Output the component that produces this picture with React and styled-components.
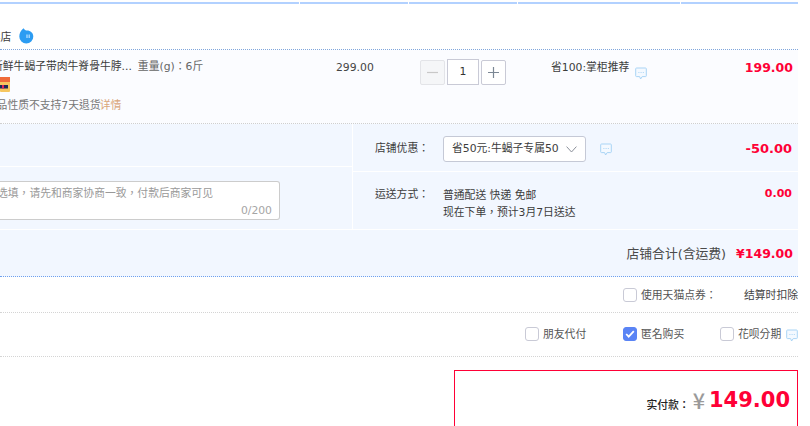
import React from "react";
import styled, { createGlobalStyle } from "styled-components";

const GlobalStyle = createGlobalStyle`
  html, body {
    margin: 0;
    padding: 0;
    background: #fff;
    overflow: hidden;
  }
  * {
    box-sizing: border-box;
  }
`;

const Page = styled.div`
  width: 798px;
  height: 426px;
  overflow: hidden;
  padding-top: 2px;
  font-family: "DejaVu Sans", "Noto Sans CJK TC", sans-serif;
  font-size: 10.8px;
  line-height: 14px;
  color: #3c3c3c;
`;

const HeaderBar = styled.div`
  display: grid;
  grid-template-columns: 299px 108px 108px 162px 117px;
  column-gap: 1px;
  height: 2px;
`;

const HeaderCell = styled.div`
  background: #b2d1ff;
`;

const ShopRow = styled.div`
  height: 46px;
  padding-top: 27px;
  display: flex;
  align-items: flex-start;
  border-bottom: 1px dotted #80a6dc;
`;

const ShopName = styled.span`
  margin-left: -21px;
  color: #3c3c3c;
`;

const ShopBadge = styled.svg`
  margin-left: 8px;
  margin-top: -3px;
  flex: none;
`;

const ItemRow = styled.div`
  display: grid;
  grid-template-columns: 300px 109px 109px 163px 117px;
  height: 74px;
  background: #fbfcff;
  border-bottom: 1px dotted #cfcfcf;
`;

const ProductCell = styled.div`
  overflow: hidden;
  padding-top: 10px;
`;

const ProductLine = styled.div`
  display: flex;
  white-space: nowrap;
`;

const ProductTitle = styled.span`
  margin-left: -8px;
  color: #3c3c3c;
`;

const ProductSku = styled.span`
  margin-left: 6px;
  color: #666;
`;

const ProductIcon = styled.svg`
  display: block;
  margin-top: 3px;
`;

const ReturnNote = styled.div`
  margin-top: 7px;
  margin-left: -25px;
  color: #777;
  white-space: nowrap;
`;

const DetailLink = styled.span`
  margin-left: -1px;
  color: #d9a57a;
`;

const PriceCell = styled.div`
  padding: 11px 0 0 36px;
  color: #444;
`;

const QuantityCell = styled.div`
  padding: 9px 0 0 11px;
  display: flex;
  align-items: flex-start;
  gap: 2px;
`;

const StepButton = styled.div`
  width: 25px;
  height: 25px;
  margin-top: 1px;
  display: flex;
  align-items: center;
  justify-content: center;
  border: 1px solid ${(p) => (p.$disabled ? "#e3e4e8" : "#c9cad6")};
  border-radius: 2px;
  background: ${(p) => (p.$disabled ? "#f5f6f8" : "#fff")};
`;

const QuantityInput = styled.div`
  width: 32px;
  height: 26px;
  display: flex;
  align-items: center;
  justify-content: center;
  border: 1px solid #c9cad6;
  background: #fff;
  color: #333;
`;

const PromoCell = styled.div`
  padding: 11px 0 0 33px;
  display: flex;
  align-items: flex-start;
  color: #3c3c3c;
  white-space: nowrap;
`;

const Bubble = styled.svg`
  flex: none;
  margin-left: ${(p) => p.$gap || 0}px;
  margin-top: ${(p) => p.$top || 0}px;
`;

const Amount = styled.div`
  text-align: right;
  padding-top: ${(p) => p.$top || 0}px;
  padding-right: ${(p) => p.$right || 5}px;
  font-weight: 700;
  font-size: ${(p) => p.$size || 12.5}px;
  color: #ff0036;
  white-space: nowrap;
`;

const OrderBlock = styled.div`
  display: grid;
  grid-template-columns: 352px 1fr;
  column-gap: 1px;
  height: 106px;
  background: #fff;
  border-bottom: 1px solid #fff;
`;

const LeftColumn = styled.div`
  display: grid;
  grid-template-rows: 42px 1fr;
  row-gap: 1px;
`;

const RightColumn = styled.div`
  display: grid;
  grid-template-rows: 47px 1fr;
  row-gap: 1px;
`;

const Panel = styled.div`
  background: #f2f7ff;
`;

const MemoPanel = styled(Panel)`
  padding-top: 14px;
`;

const MemoBox = styled.div`
  width: 280px;
  height: 39px;
  border: 1px solid #ccc;
  border-left: 0;
  border-radius: 0 3px 3px 0;
  background: #fff;
  overflow: hidden;
`;

const MemoPlaceholder = styled.div`
  margin: 5px 0 0 -3px;
  color: #999;
  white-space: nowrap;
`;

const MemoCount = styled.div`
  margin-top: 3px;
  padding-right: 7px;
  text-align: right;
  color: #a5a5a5;
`;

const FormRow = styled(Panel)`
  display: grid;
  grid-template-columns: 68px 1fr auto;
  padding-left: 22px;
`;

const CouponRow = styled(FormRow)`
  padding-top: 12px;
`;

const ShippingRow = styled(FormRow)`
  padding-top: 15px;
`;

const FieldLabel = styled.div`
  color: #3c3c3c;
  padding-top: ${(p) => p.$top || 0}px;
`;

const CouponField = styled.div`
  display: flex;
  align-items: flex-start;
`;

const CouponSelect = styled.div`
  width: 143px;
  height: 26px;
  padding: 0 8px;
  display: flex;
  align-items: center;
  justify-content: space-between;
  border: 1px solid #c5c9d6;
  border-radius: 3px;
  background: #fff;
  color: #3c3c3c;
  white-space: nowrap;
`;

const ShippingText = styled.div`
  line-height: 17px;
  color: #3c3c3c;
`;

const TotalRow = styled.div`
  height: 47px;
  padding: 17px 0 0;
  display: flex;
  justify-content: flex-end;
  align-items: baseline;
  background: #f2f7ff;
  border-bottom: 1px dotted #6fa0ee;
`;

const TotalLabel = styled.span`
  font-size: 12.8px;
  color: #4a4a4a;
  margin-right: 10px;
`;

const PointsRow = styled.div`
  height: 36px;
  padding: 11px 0 0 623px;
  display: flex;
  align-items: flex-start;
  border-bottom: 1px dotted #d4d4d4;
  white-space: nowrap;
`;

const OptionsRow = styled.div`
  height: 44px;
  padding: 14px 0 0 525px;
  display: flex;
  align-items: flex-start;
  border-bottom: 1px dotted #d4d4d4;
  white-space: nowrap;
`;

const Option = styled.div`
  width: ${(p) => p.$width}px;
  flex: none;
  display: flex;
  align-items: center;
  gap: 4px;
  line-height: 16px;
  color: #555;
`;

const Check = styled.span`
  width: 14px;
  height: 14px;
  margin-bottom: 2px;
  flex: none;
  display: flex;
  align-items: center;
  justify-content: center;
  border: 1px solid ${(p) => (p.$on ? "#5a84f5" : "#c9cad6")};
  border-radius: 3px;
  background: ${(p) => (p.$on ? "#5a84f5" : "#fff")};
`;

const PointsNote = styled.span`
  color: #444;
  line-height: 16px;
`;

const PayBox = styled.div`
  width: 344px;
  height: 90px;
  margin: 13px 0 0 454px;
  padding: 15px 7px 0 0;
  display: flex;
  justify-content: flex-end;
  align-items: flex-start;
  border: 1px solid #ff0036;
`;

const PayLabel = styled.span`
  margin-top: 13px;
  color: #222;
  font-weight: 500;
`;

const PayYen = styled.span`
  margin: 0 4px 0 3px;
  font-family: "Noto Sans CJK SC", sans-serif;
  font-size: 21.6px;
  line-height: 28px;
  font-weight: 500;
  color: #9a9a9a;
`;

const PayAmount = styled.span`
  font-size: 21px;
  line-height: 28px;
  font-weight: 700;
  color: #ff0036;
`;

const columns = [0, 1, 2, 3, 4];

const BubbleIcon = ({ gap, top }) => (
  <Bubble $gap={gap} $top={top} width="12" height="13" viewBox="0 0 12 13" fill="none">
    <path d="M1.5 1h9a.8.8 0 0 1 .8.8v7a.8.8 0 0 1-.8.8H7.2L5.6 12 4.6 9.6H1.5a.8.8 0 0 1-.8-.8v-7a.8.8 0 0 1 .8-.8z" fill="#f4f9ff" stroke="#a9d4f5" />
    <path d="M3.4 5.5h1M5.6 5.5h1M7.8 5.5h1" stroke="#a9d4f5" />
  </Bubble>
);

const CheckBox = ({ on }) => (
  <Check $on={on}>
    {on && (
      <svg width="10" height="8" viewBox="0 0 10 8" fill="none">
        <path d="M1.2 4l2.5 2.6L8.8 1.2" stroke="#fff" strokeWidth="1.8" />
      </svg>
    )}
  </Check>
);

export default function App() {
  return (
    <>
      <GlobalStyle />
      <Page>
        <HeaderBar>
          {columns.map((c) => (
            <HeaderCell key={c} />
          ))}
        </HeaderBar>

        <ShopRow>
          <ShopName>专卖店</ShopName>
          <ShopBadge width="15" height="16" viewBox="0 0 15 16">
            <path d="M4.500.3C1.800 2.500.3 5.200.3 8.600a7 7 0 0 0 14 0c0-3.600-2.800-6-6.300-6C6.700 2.600 5.500 1.700 4.500.3z" fill="#2c9cf2" />
            <path d="M8 6.500v3.400M10.200 6.500v3.400" stroke="#bfe3ff" strokeWidth="1.200" />
          </ShopBadge>
        </ShopRow>

        <ItemRow>
          <ProductCell>
            <ProductLine>
              <ProductTitle>新鲜牛蝎子带肉牛脊骨牛脖...</ProductTitle>
              <ProductSku>重量(g)：6斤</ProductSku>
            </ProductLine>
            <ProductIcon width="10" height="15" viewBox="0 0 10 15">
              <rect width="10" height="15" rx="1" fill="#f6c65f" />
              <rect width="10" height="5" fill="#ef6b3a" />
              <rect y="8" width="8" height="3.500" fill="#1c2a5a" />
              <rect x="2" y="8" width="2" height="3.500" fill="#e0245e" />
            </ProductIcon>
            <ReturnNote>
              该商品性质不支持7天退货
              <DetailLink>详情</DetailLink>
            </ReturnNote>
          </ProductCell>
          <PriceCell>299.00</PriceCell>
          <QuantityCell>
            <StepButton $disabled>
              <svg width="13" height="13" viewBox="0 0 13 13">
                <path d="M1 6.500h11" stroke="#c8c8c8" strokeWidth="1.200" />
              </svg>
            </StepButton>
            <QuantityInput>1</QuantityInput>
            <StepButton>
              <svg width="13" height="13" viewBox="0 0 13 13">
                <path d="M1 6.500h11M6.500 1v11" stroke="#7b8794" strokeWidth="1.200" />
              </svg>
            </StepButton>
          </QuantityCell>
          <PromoCell>
            省100:掌柜推荐
            <BubbleIcon gap={6} top={6} />
          </PromoCell>
          <Amount $top={11}>199.00</Amount>
        </ItemRow>

        <OrderBlock>
          <LeftColumn>
            <Panel />
            <MemoPanel>
              <MemoBox>
                <MemoPlaceholder>选填，请先和商家协商一致，付款后商家可见</MemoPlaceholder>
                <MemoCount>0/200</MemoCount>
              </MemoBox>
            </MemoPanel>
          </LeftColumn>
          <RightColumn>
            <CouponRow>
              <FieldLabel $top={6}>店铺优惠：</FieldLabel>
              <CouponField>
                <CouponSelect>
                  省50元:牛蝎子专属50
                  <svg width="11" height="7" viewBox="0 0 11 7" fill="none">
                    <path d="M.6.600l4.900 5.400L10.400.600" stroke="#8a8f99" />
                  </svg>
                </CouponSelect>
                <BubbleIcon gap={14} top={7} />
              </CouponField>
              <Amount $size={13} $right={6} $top={6}>
                -50.00
              </Amount>
            </CouponRow>
            <ShippingRow>
              <FieldLabel $top={1}>运送方式：</FieldLabel>
              <ShippingText>
                普通配送 快递 免邮
                <br />
                现在下单，预计3月7日送达
              </ShippingText>
              <Amount $size={11} $right={6}>
                0.00
              </Amount>
            </ShippingRow>
          </RightColumn>
        </OrderBlock>

        <TotalRow>
          <TotalLabel>店铺合计(含运费)</TotalLabel>
          <Amount>¥149.00</Amount>
        </TotalRow>

        <PointsRow>
          <Option $width={121}>
            <CheckBox />
            使用天猫点券：
          </Option>
          <PointsNote>结算时扣除</PointsNote>
        </PointsRow>

        <OptionsRow>
          <Option $width={98}>
            <CheckBox />
            朋友代付
          </Option>
          <Option $width={97}>
            <CheckBox on />
            匿名购买
          </Option>
          <Option $width={78}>
            <CheckBox />
            花呗分期
            <BubbleIcon gap={1} top={1} />
          </Option>
        </OptionsRow>

        <PayBox>
          <PayLabel>实付款：</PayLabel>
          <PayYen>¥</PayYen>
          <PayAmount>149.00</PayAmount>
        </PayBox>
      </Page>
    </>
  );
}
